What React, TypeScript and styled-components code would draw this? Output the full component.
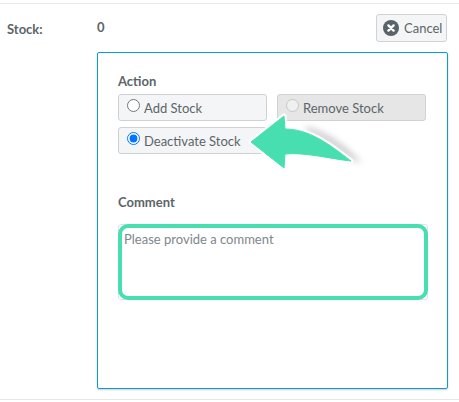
import styled, { createGlobalStyle } from 'styled-components';

const GlobalStyle = createGlobalStyle`
  html, body {
    margin: 0;
    padding: 0;
    background: #ffffff;
    font-family: Lato, "Open Sans", sans-serif;
    color: #5b6569;
  }
`;

const Page = styled.div`
  width: 459px;
  height: 402px;
  box-sizing: border-box;
  padding-top: 3px;
  overflow: hidden;
`;

const StockRow = styled.div`
  display: grid;
  grid-template-columns: 97px 351px;
  grid-template-rows: 48px auto;
  border-top: 1px solid #e8e8e8;
  border-bottom: 1px solid #e8e8e8;
  height: 397px;
  box-sizing: border-box;
`;

const FieldLabel = styled.div`
  font-size: 13px;
  font-weight: 700;
  padding: 17px 0 0 7px;
  line-height: 16px;
`;

const ValueRow = styled.div`
  display: flex;
  justify-content: space-between;
  align-items: flex-start;
  padding-top: 10px;
  padding-right: 1px;
  font-size: 13px;
  font-weight: 700;
  box-sizing: border-box;
`;

const StockValue = styled.span`
  line-height: 16px;
  padding-top: 5px;
`;

const CancelButton = styled.button`
  display: flex;
  align-items: center;
  gap: 5px;
  width: 71px;
  height: 28px;
  padding: 0 0 0 6px;
  box-sizing: border-box;
  background: #f4f5f6;
  border: 1px solid #d0d2d3;
  border-radius: 3px;
  font-family: inherit;
  font-size: 13px;
  color: #5b6569;
`;

const Panel = styled.div`
  grid-column: 2;
  position: relative;
  width: 351px;
  height: 337px;
  box-sizing: border-box;
  padding: 20px 20px 0 20px;
  border: 1px solid #0a9fc9;
  border-radius: 2px;
  box-shadow: 0 1px 2px rgba(0, 0, 0, 0.2);
`;

const SectionLabel = styled.div`
  font-size: 13px;
  font-weight: 700;
  line-height: 16px;
`;

const RadioGroup = styled.div`
  display: flex;
  flex-wrap: wrap;
  gap: 6px 10px;
  margin-top: 5px;
  width: 310px;
`;

const RadioOption = styled.label<{ $disabled?: boolean }>`
  display: flex;
  align-items: center;
  gap: 4px;
  width: 149px;
  height: 27px;
  padding-left: 8px;
  box-sizing: border-box;
  background: ${(props) => (props.$disabled ? '#e6e6e6' : '#f4f5f6')};
  border: 1px solid #cfd1d2;
  border-radius: 3px;
  font-size: 13px;
`;

const RadioInput = styled.input`
  width: 13px;
  height: 13px;
  margin: 0 0 4px 0;
`;

const CommentSection = styled.div`
  margin-top: 40px;
`;

const CommentField = styled.div`
  position: relative;
  width: 310px;
  height: 76px;
  margin-top: 14px;
`;

const CommentInput = styled.textarea`
  display: block;
  width: 100%;
  height: 100%;
  box-sizing: border-box;
  padding: 6px 5px;
  border: 1px solid #e2e2e2;
  border-radius: 3px;
  resize: none;
  font-family: inherit;
  font-size: 13px;
  line-height: 16px;
  color: #5b6569;

  &::placeholder {
    color: #80878a;
    opacity: 1;
  }
`;

const Highlight = styled.div`
  position: absolute;
  inset: 0;
  border: 4px solid #48dfb0;
  border-radius: 10px;
  pointer-events: none;
`;

const ArrowMark = styled.svg`
  position: absolute;
  left: 148px;
  top: 56px;
  pointer-events: none;
`;

const CancelIcon = () => (
  <svg width="16" height="16" viewBox="0 0 16 16">
    <circle cx="8" cy="8" r="8" fill="#58636a" />
    <path d="M5.4 5.4l5.2 5.2M10.6 5.4l-5.2 5.2" stroke="#fff" strokeWidth="2.4" strokeLinecap="round" />
  </svg>
);

const ARROW =
  'M5 33 L38 7 L39 20 C62 20 82 34 105 52 C85 50 60 43 39 45 L38 59 Z';

const Arrow = () => (
  <ArrowMark width="130" height="70" viewBox="0 0 130 70">
    <defs>
      <filter id="arrowShadow" x="-30%" y="-30%" width="160%" height="160%">
        <feGaussianBlur stdDeviation="3" />
      </filter>
    </defs>
    <path d="M60 18 C80 22 98 36 116 54 L104 50 C88 36 72 26 60 22 Z" fill="#777" opacity="0.42" filter="url(#arrowShadow)" />
    <path d={ARROW} fill="#fff" stroke="#fff" strokeWidth="5" strokeLinejoin="round" />
    <path d={ARROW} fill="#48dfb0" stroke="#48dfb0" strokeWidth="1" strokeLinejoin="round" />
  </ArrowMark>
);

export default function App() {
  return (
    <Page>
      <GlobalStyle />
      <StockRow>
        <FieldLabel>Stock:</FieldLabel>
        <ValueRow>
          <StockValue>0</StockValue>
          <CancelButton type="button">
            <CancelIcon />
            Cancel
          </CancelButton>
        </ValueRow>
        <Panel>
          <SectionLabel>Action</SectionLabel>
          <RadioGroup>
            <RadioOption>
              <RadioInput type="radio" name="action" />
              Add Stock
            </RadioOption>
            <RadioOption $disabled>
              <RadioInput type="radio" name="action" disabled />
              Remove Stock
            </RadioOption>
            <RadioOption>
              <RadioInput type="radio" name="action" defaultChecked />
              Deactivate Stock
            </RadioOption>
          </RadioGroup>
          <CommentSection>
            <SectionLabel>Comment</SectionLabel>
            <CommentField>
              <CommentInput placeholder="Please provide a comment" />
              <Highlight />
            </CommentField>
          </CommentSection>
          <Arrow />
        </Panel>
      </StockRow>
    </Page>
  );
}
